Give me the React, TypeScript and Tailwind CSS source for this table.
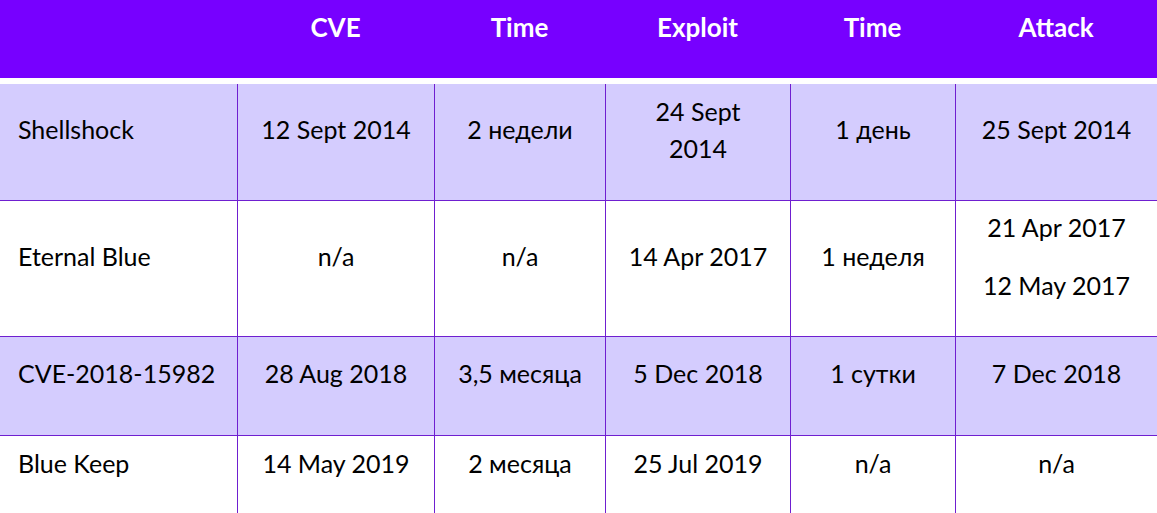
const cols = 'grid grid-cols-[237px_197px_171px_185px_165px_1fr]'

type Row = { cells: (string | string[])[]; h: string; bg: string }

const rows: Row[] = [
  { cells: ['Shellshock', '12 Sept 2014', '2 недели', '24 Sept\n2014', '1 день', '25 Sept 2014'], h: 'h-[117px]', bg: 'bg-[#d4ccfe]' },
  { cells: ['Eternal Blue', 'n/a', 'n/a', '14 Apr 2017', '1 неделя', ['21 Apr 2017', '12 May 2017']], h: 'h-[136px]', bg: 'bg-white' },
  { cells: ['CVE-2018-15982', '28 Aug 2018', '3,5 месяца', '5 Dec 2018', '1 сутки', '7 Dec 2018'], h: 'h-[99px]', bg: 'bg-[#d4ccfe]' },
  { cells: ['Blue Keep', '14 May 2019', '2 месяца', '25 Jul 2019', 'n/a', 'n/a'], h: 'h-[80px]', bg: 'bg-white' },
]

const headers = ['', 'CVE', 'Time', 'Exploit', 'Time', 'Attack']

function Cell({ value, first }: { value: string | string[]; first: boolean }) {
  const base = first
    ? 'flex items-center pl-[18px] pb-[25px]'
    : 'flex flex-col items-center justify-center text-center pb-[25px] border-l border-[#6f1fd0]'
  if (Array.isArray(value)) {
    return (
      <div className={base + ' gap-[21px]'}>
        {value.map((v) => (
          <div key={v}>{v}</div>
        ))}
      </div>
    )
  }
  return (
    <div className={base}>
      <div className="whitespace-pre-line">{value}</div>
    </div>
  )
}

export default function App() {
  return (
    <div
      className="w-[1157px] h-[513px] overflow-hidden bg-white text-black text-[25px] leading-[37px]"
      style={{ fontFamily: 'Lato, "Noto Sans", sans-serif' }}
    >
      <div className={cols + ' h-[78px] bg-[#7700ff] text-white font-bold text-[26px]'}>
        {headers.map((h, i) => (
          <div key={i} className="flex items-center justify-center pb-[24px]">
            {h}
          </div>
        ))}
      </div>
      <div className="h-[6px]" />
      {rows.map((r, i) => (
        <div key={i} className={cols + ' ' + r.h + ' ' + r.bg + ' border-b border-[#6f1fd0]'}>
          {r.cells.map((c, j) => (
            <Cell key={j} value={c} first={j === 0} />
          ))}
        </div>
      ))}
    </div>
  )
}
